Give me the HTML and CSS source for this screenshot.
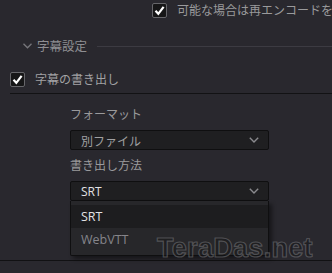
FILE: index.html
```html
<!DOCTYPE html>
<html lang="ja">
<head>
    <meta charset="UTF-8">
    <meta name="viewport" content="width=device-width, initial-scale=1.0">
    <title>字幕設定</title>
    <link rel="stylesheet" href="styles.css">
</head>
<body>
    <div class="top-row">
        <span class="check"><svg viewBox="0 0 15 15" width="15" height="15"><path d="M3.5 7.8 L6.3 10.8 L11.6 3.8" fill="none" stroke="#fff" stroke-width="2.2"/></svg></span>
        <span class="top-text">可能な場合は再エンコードをバイパス</span>
    </div>

    <div class="section">
        <svg class="chevron" viewBox="0 0 9 6" width="9" height="6"><path d="M0.5 0.8 L4.5 4.8 L8.5 0.8" fill="none" stroke="#77777c" stroke-width="1.3"/></svg>
        <span class="section-title">字幕設定</span>
        <span class="section-line"></span>
    </div>

    <div class="check-row">
        <span class="check"><svg viewBox="0 0 15 15" width="15" height="15"><path d="M3.5 7.8 L6.3 10.8 L11.6 3.8" fill="none" stroke="#fff" stroke-width="2.2"/></svg></span>
        <span class="check-label">字幕の書き出し</span>
    </div>
    <div class="divider"></div>

    <div class="form">
        <div class="label first">フォーマット</div>
        <div class="select">
            <span>別ファイル</span>
            <svg class="arrow" viewBox="0 0 10 6" width="10" height="6"><path d="M0.8 0.8 L5 5 L9.2 0.8" fill="none" stroke="#8a8a8e" stroke-width="1.4"/></svg>
        </div>
        <div class="label">書き出し方法</div>
        <div class="select open">
            <span class="value">SRT</span>
            <svg class="arrow" viewBox="0 0 10 6" width="10" height="6"><path d="M0.8 0.8 L5 5 L9.2 0.8" fill="none" stroke="#8a8a8e" stroke-width="1.4"/></svg>
            <div class="menu">
                <div class="item selected">SRT</div>
                <div class="item">WebVTT</div>
            </div>
        </div>
    </div>
    <div class="bottom-line"></div>

    <div class="watermark">TeraDas.net</div>
</body>
</html>
```

FILE: styles.css
```css
* {
    box-sizing: border-box;
}
body {
    margin: 0;
    background: #29282e;
    font-family: "Noto Sans CJK JP", "Noto Sans", sans-serif;
    font-size: 12px;
    color: #9a9a9c;
    overflow: hidden;
    height: 273px;
    position: relative;
}
.check {
    width: 15px;
    height: 15px;
    flex: none;
    background: #161617;
    border: 1px solid #66666a;
    border-radius: 2px;
    display: flex;
}
.check svg {
    margin: -1px;
}
.top-row {
    display: flex;
    align-items: center;
    height: 20px;
    padding-left: 152px;
    white-space: nowrap;
    overflow: hidden;
}
.top-text {
    margin-left: 10px;
    line-height: 16px;
}
.section {
    display: flex;
    align-items: center;
    height: 14px;
    margin-top: 19px;
    padding-left: 23px;
}
.chevron {
    flex: none;
}
.section-title {
    margin-left: 5px;
    color: #8e8e92;
    font-size: 12.5px;
    line-height: 14px;
}
.section-line {
    flex: 1;
    height: 1px;
    margin-left: 10px;
    background: #3c3b42;
}
.check-row {
    display: flex;
    align-items: center;
    height: 16px;
    margin-top: 18px;
    padding-left: 10px;
}
.check-label {
    margin-left: 10px;
    color: #a2a2a4;
    line-height: 16px;
}
.divider {
    height: 1px;
    margin: 6px 0 0 10px;
    background: #121214;
}
.form {
    margin-left: 70px;
    width: 199px;
}
.label {
    height: 16px;
    line-height: 16px;
    margin-top: 7px;
}
.label.first {
    margin-top: 12px;
}
.select {
    position: relative;
    display: flex;
    align-items: center;
    justify-content: space-between;
    height: 20px;
    margin-top: 8px;
    padding: 0 9px 0 10px;
    background: #1f1f21;
    border: 1px solid #0f0f10;
    border-radius: 2px;
    color: #a0a0a2;
}
.select .value {
    color: #e2e2e4;
    font-family: "Open Sans", "Noto Sans", sans-serif;
}
.menu {
    position: absolute;
    top: 19px;
    left: -1px;
    right: -1px;
    height: 55px;
    padding: 4px 0;
    background: #27272a;
    border: 1px solid #0f0f10;
    border-top: none;
    border-radius: 0 0 2px 2px;
    box-shadow: 3px 3px 4px rgba(0, 0, 0, 0.45);
    font-family: "Open Sans", "Noto Sans", sans-serif;
}
.item {
    height: 23px;
    line-height: 23px;
    padding-left: 10px;
    color: #85858a;
    font-size: 12.5px;
}
.item.selected {
    background: #1d1d1f;
    color: #e2e2e4;
}
.bottom-line {
    height: 1px;
    margin-top: 59px;
    background: #111113;
}
.watermark {
    position: absolute;
    left: 157px;
    top: 235px;
    font-family: "Liberation Sans", sans-serif;
    font-weight: bold;
    font-size: 27px;
    line-height: 27px;
    color: rgba(24, 24, 26, 0.55);
    -webkit-text-stroke: 1.2px rgba(120, 120, 124, 0.55);
    letter-spacing: 0.3px;
}
```
